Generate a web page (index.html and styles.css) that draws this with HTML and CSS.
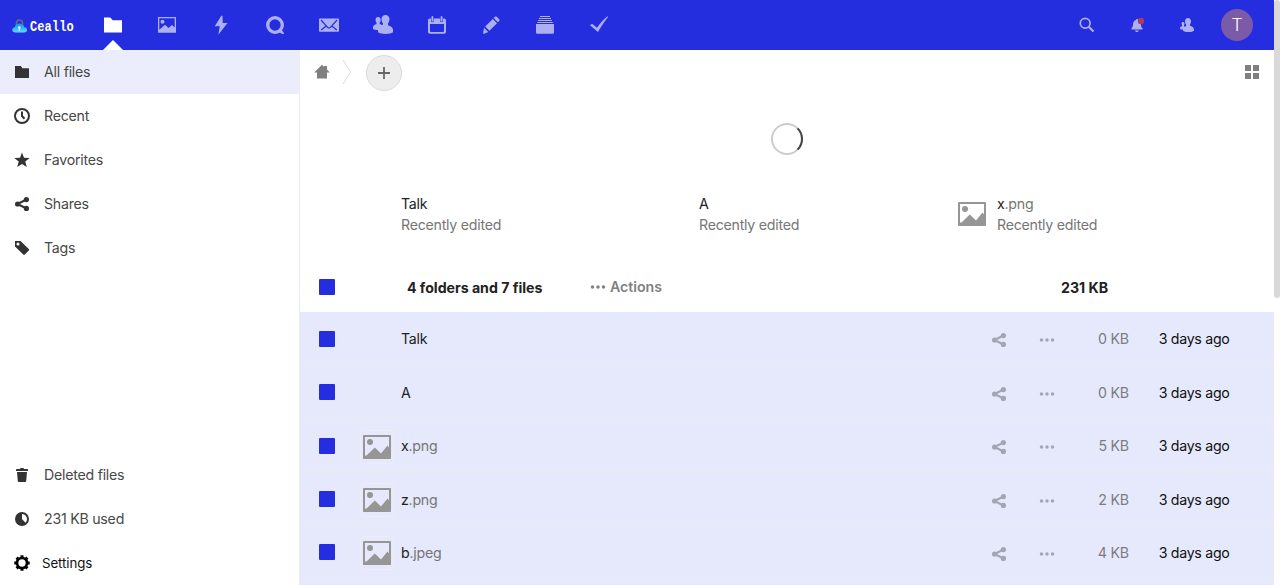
FILE: index.html
```html
<!DOCTYPE html>
<html lang="en">
<head>
<meta charset="utf-8">
<title>Files - Ceallo</title>
<link rel="stylesheet" href="styles.css">
</head>
<body>
<svg class="sprite" width="0" height="0">
  <defs>
    <symbol id="folder" viewBox="0 0 16 16"><path d="M1 2v12h14V4.2H8.4L6.900 2z"/></symbol>
    <symbol id="picture" viewBox="0 0 32 32"><path fill-rule="evenodd" d="M3 4h26c.6 0 1 .4 1 1v22c0 .6-.4 1-1 1H3c-.6 0-1-.4-1-1V5c0-.6.400-1 1-1zM4 6v18.400h1.500l8.300-8 6.200 6.200 6.500-8 1.500 1.800V6z"/><circle cx="9" cy="11" r="3"/></symbol>
    <symbol id="share" viewBox="0 0 16 16"><path d="M3.500 8 12.500 3.500M3.500 8l9 4.500" stroke="currentColor" stroke-width="2"/><circle cx="3.600" cy="8" r="2.600"/><circle cx="12.400" cy="3.600" r="2.600"/><circle cx="12.400" cy="12.400" r="2.600"/></symbol>
    <symbol id="more" viewBox="0 0 16 16"><circle cx="2.500" cy="8" r="1.750"/><circle cx="8" cy="8" r="1.750"/><circle cx="13.500" cy="8" r="1.750"/></symbol>
    <symbol id="people" viewBox="0 0 20 20"><path d="M12.500 0c2.300 0 4 1.700 4 4.200 0 1.800-.7 3.100-1.500 4.200v1.800c1.900.8 4.900 1.800 5 4.600v2.500c-1.500 1.200-4.300 1.700-7.500 1.700s-6-.5-7.500-1.700v-2.200c-2 0-4-.3-5-1v-2c.2-1.800 2-2.500 3.500-3.100V7.600C2.900 7 2.500 6 2.500 5c0-1.900 1-3 2.600-3S7.700 3.100 7.700 5c0 1-.4 2-1 2.600V9c.8.300 1.600.6 2.300 1l1-.4V8.400C9 7.300 8.500 6 8.500 4.200 8.500 1.700 10.200 0 12.500 0z"/></symbol>
  </defs>
</svg>
<div class="page">
  <header class="header">
    <a class="logo">
      <svg class="logo-mark" width="16" height="14" viewBox="0 0 16 14"><defs><linearGradient id="cloud" x2="0" y2="1"><stop stop-color="#0b8ff5"/><stop offset="1" stop-color="#5ddcff"/></linearGradient></defs><path d="M4.500 6V4a3 3 0 0 1 6 0v2" fill="none" stroke="#686d70" stroke-width="1.600"/><path d="M3.500 13.500C1.500 13.500.3 12.600.3 11c0-1.400 1-2.600 2.500-2.700C3 6.200 5 4.500 7.500 4.500c2.600 0 4.500 1.600 4.900 3.800 1.700.1 2.700 1.200 2.700 2.700s-1.200 2.500-3.100 2.500z" fill="url(#cloud)"/><path d="M7.300 7.200a1.200 1.200 0 0 1 .7 2.200v2h-1.300v-2a1.200 1.200 0 0 1 .6-2.200z" fill="#fff"/></svg>
      <span class="logo-name">Ceallo</span>
    </a>
    <nav class="apps">
      <a class="app current"><svg width="20" height="20" viewBox="0 0 20 20"><path d="M1 2.500v15h18V5.200H9.700L7.300 2.500z"/></svg></a>
      <a class="app"><svg width="20" height="20" viewBox="0 0 20 20"><path fill-rule="evenodd" d="M1 2h18v15.700H1zM2.300 3.300v11.400L8 9.700l3.500 3.200 3.500-3 2.700 2.500V3.300z"/><circle cx="5.500" cy="6.700" r="2"/></svg></a>
      <a class="app"><svg width="20" height="20" viewBox="0 0 20 20"><path d="M10.300.7 3.800 11.300h5l-1.500 8.400L16.500 8h-4.800l-.2-7.300z"/></svg></a>
      <a class="app"><svg width="20" height="20" viewBox="0 0 20 20"><circle cx="10" cy="10" r="7.300" fill="none" stroke="currentColor" stroke-width="3.300"/><path d="M15.500 13 19 18.300c0 .8-.7 1-1.500.8L13 17z"/></svg></a>
      <a class="app"><svg width="20" height="20" viewBox="0 0 20 20"><rect y="3.500" width="20" height="13.300" rx=".7"/><path d="m2 5 6.600 7.300c.8.900 2 .9 2.800 0L18 5M2.200 15l5-4M17.800 15l-5-4" fill="none" stroke="#252edf" stroke-width="1.200"/></svg></a>
      <a class="app"><svg width="20" height="20"><use href="#people"/></svg></a>
      <a class="app"><svg width="20" height="20" viewBox="0 0 20 20"><path fill-rule="evenodd" d="M3 3.500h1V6c0 1.600 2.700 1.600 2.700 0V3.500h6.600V6c0 1.600 2.700 1.600 2.700 0V3.500h1c1.200 0 2 .8 2 2v11.300c0 1.200-.8 2-2 2H3c-1.200 0-2-.8-2-2V5.500c0-1.200.8-2 2-2zM3 9v6.700c0 .8.400 1.300 1.200 1.300h11.600c.8 0 1.200-.5 1.200-1.300V9z"/><rect x="4.500" y="1" width="1.800" height="5.500" rx=".9"/><rect x="13.700" y="1" width="1.800" height="5.500" rx=".9"/></svg></a>
      <a class="app"><svg width="20" height="20" viewBox="0 0 20 20"><path d="m3 12.800 4.200 4.200-4 1.700c-.8.300-1.300-.1-1-1zM4.200 11.600 11.800 4 16 8.200l-7.600 7.600zM12.700 3.100l1.300-1.300c.5-.5 1.200-.5 1.700 0l2.500 2.500c.5.5.5 1.200 0 1.700l-1.300 1.300z"/></svg></a>
      <a class="app"><svg width="20" height="20" viewBox="0 0 20 20"><path d="M5 1h10v1H5zM4 3h12v1.100H4zM3 5h14v1.100H3zM2.300 7h15.400v1.100H2.300zM1 9h18v8.500a1.300 1.300 0 0 1-1.300 1.300H2.300A1.300 1.300 0 0 1 1 17.500z"/></svg></a>
      <a class="app"><svg width="20" height="20" viewBox="0 0 20 20"><path d="M1 10.200 3 8.800l5 3.900C11 8.300 14.500 4.300 18.500 1.300l.5.600C15.500 6.500 12 11.500 9 17z"/></svg></a>
    </nav>
    <div class="tools">
      <a class="tool"><svg width="16" height="16" viewBox="0 0 16 16"><circle cx="6.200" cy="6.200" r="4.900" fill="none" stroke="currentColor" stroke-width="1.700"/><path d="m9.500 9.500 5 5" stroke="currentColor" stroke-width="2.200"/></svg></a>
      <a class="tool"><svg width="16" height="16" viewBox="0 0 16 16"><path d="M8 2c-.7 0-1 .5-1 1-2.500.6-3 2.800-3 5-.1 1.600-1 2.500-1.500 3.200V12.500h11v-1.300C12.500 10.500 12 9.600 12 8c0-2.200-1-4.400-3-5 0-.5-.3-1-1-1zM6 13.500c0 .9.800 1.500 1.900 1.500s1.900-.6 1.900-1.500z"/><circle cx="12" cy="4" r="3.200" fill="#ad3865"/></svg></a>
      <a class="tool"><svg width="16" height="16" viewBox="0 0 16 16"><path d="M9 1c1.900 0 3 1.300 3 3.200 0 1.400-.5 2.400-1 3v1.600c1.800.5 4 1.500 4 3.700v1.200c-1 .9-3 1.300-5.500 1.300S5 14.600 4 13.700v-1.200c-1.200 0-2.200-.1-3-.6v-1.300c.3-.8 1.300-1 2-1.300V8.100c-.4-.4-.5-.9-.5-1.500C2.500 5.600 3 5 4 5s1.500.6 1.500 1.600c0 .6-.1 1.100-.5 1.500v1.200l1 .4 1-.8V7.200c-.5-.6-1-1.600-1-3C6 2.300 7.100 1 9 1z"/></svg></a>
      <a class="tool"><span class="avatar">T</span></a>
    </div>
  </header>
  <div class="body">
    <aside class="sidebar">
      <ul class="nav">
        <li class="nav-item active"><svg width="16" height="16"><use href="#folder"/></svg><span>All files</span></li>
        <li class="nav-item"><svg width="16" height="16" viewBox="0 0 16 16"><circle cx="8" cy="8" r="7" fill="none" stroke="currentColor" stroke-width="2"/><path d="M8 3.500V8l2.500 2.700" fill="none" stroke="currentColor" stroke-width="2"/></svg><span>Recent</span></li>
        <li class="nav-item"><svg width="16" height="16" viewBox="0 0 16 16"><path d="m8 .6 2 5.100 5.700.2-4.400 3.600 1.500 5.500L8 11.900 3.200 15l1.500-5.500L.3 5.900 6 5.700z"/></svg><span>Favorites</span></li>
        <li class="nav-item"><svg width="16" height="16"><use href="#share"/></svg><span>Shares</span></li>
        <li class="nav-item"><svg width="16" height="16" viewBox="0 0 16 16"><path fill-rule="evenodd" d="M1 1v5.500l8.300 8c.5.500 1 .5 1.500 0l4-4c.5-.5.500-1 0-1.500l-8.300-8zM4 2.600a1.500 1.500 0 1 1 0 3 1.500 1.500 0 0 1 0-3z"/></svg><span>Tags</span></li>
      </ul>
      <ul class="nav nav-bottom">
        <li class="nav-item"><svg width="16" height="16" viewBox="0 0 16 16"><path d="M6.500 1 6 2H3c-.6 0-1 .4-1 1v1h12V3c0-.6-.4-1-1-1h-3l-.5-1zM3 5l.8 9c.1.600.4 1 1 1h6.400c.6 0 .9-.4 1-1l.8-9z"/></svg><span>Deleted files</span></li>
        <li class="nav-item"><svg width="16" height="16" viewBox="0 0 16 16"><path fill-rule="evenodd" d="M8 1a7 7 0 1 1 0 14A7 7 0 0 1 8 1zm0 2v5l3.500 3.800C14.700 8.600 12.500 3 8 3z"/></svg><span>231 KB used</span></li>
        <li class="nav-item settings"><svg width="16" height="16" viewBox="0 0 16 16"><circle cx="8" cy="8" r="5" fill="none" stroke="currentColor" stroke-width="2.700"/><path d="M8 .3v2.500M8 13.200v2.500M.3 8h2.500M13.200 8h2.500M2.600 2.600l1.800 1.800M11.600 11.600l1.800 1.800M2.600 13.400l1.800-1.800M11.600 4.400l1.800-1.800" stroke="currentColor" stroke-width="3"/></svg><span>Settings</span></li>
      </ul>
    </aside>
    <main class="content">
      <div class="controls">
        <svg class="home" width="16" height="16" viewBox="0 0 16 16"><path d="M8 .8 .2 8.500H3v6h10v-6h2.800L13 5.600V2h-3v.8z"/></svg>
        <svg class="crumb" width="10" height="26" viewBox="0 0 10 26"><path d="m1 1 7.500 12L1 25" fill="none" stroke="#dcdcdc"/></svg>
        <span class="add"><svg width="12" height="12" viewBox="0 0 12 12"><path d="M6 0v12M0 6h12" stroke="#666" stroke-width="1.800"/></svg></span>
        <span class="grid-toggle"><i></i><i></i><i></i><i></i></span>
      </div>
      <div class="loading"><svg width="32" height="32" viewBox="0 0 32 32"><circle cx="16" cy="16" r="15" fill="none" stroke="#ccc" stroke-width="2"/><path d="M26.600 5.400a15 15 0 0 1 0 21.200" fill="none" stroke="#444" stroke-width="2"/></svg></div>
      <div class="recents">
        <div class="recent"><span class="thumb"></span><div><p class="name">Talk</p><p class="sub">Recently edited</p></div></div>
        <div class="recent"><span class="thumb"></span><div><p class="name">A</p><p class="sub">Recently edited</p></div></div>
        <div class="recent"><span class="thumb"><svg width="32" height="32"><use href="#picture"/></svg></span><div><p class="name">x<span>.png</span></p><p class="sub">Recently edited</p></div></div>
      </div>
      <div class="summary"><i class="check"></i><b class="count">4 folders and 7 files</b><span class="actions"><svg width="16" height="16"><use href="#more"/></svg><span>Actions</span></span><b class="total">231 KB</b></div>
      <div class="files">
        <div class="file"><i class="check"></i><span class="thumb"></span><span class="name">Talk</span><svg class="share" width="16" height="16"><use href="#share"/></svg><svg class="more" width="16" height="16"><use href="#more"/></svg><span class="size">0 KB</span><span class="date">3 days ago</span></div>
        <div class="file"><i class="check"></i><span class="thumb"></span><span class="name">A</span><svg class="share" width="16" height="16"><use href="#share"/></svg><svg class="more" width="16" height="16"><use href="#more"/></svg><span class="size">0 KB</span><span class="date">3 days ago</span></div>
        <div class="file"><i class="check"></i><span class="thumb framed"><svg width="32" height="32"><use href="#picture"/></svg></span><span class="name">x<span>.png</span></span><svg class="share" width="16" height="16"><use href="#share"/></svg><svg class="more" width="16" height="16"><use href="#more"/></svg><span class="size">5 KB</span><span class="date">3 days ago</span></div>
        <div class="file"><i class="check"></i><span class="thumb framed"><svg width="32" height="32"><use href="#picture"/></svg></span><span class="name">z<span>.png</span></span><svg class="share" width="16" height="16"><use href="#share"/></svg><svg class="more" width="16" height="16"><use href="#more"/></svg><span class="size">2 KB</span><span class="date">3 days ago</span></div>
        <div class="file"><i class="check"></i><span class="thumb framed"><svg width="32" height="32"><use href="#picture"/></svg></span><span class="name">b<span>.jpeg</span></span><svg class="share" width="16" height="16"><use href="#share"/></svg><svg class="more" width="16" height="16"><use href="#more"/></svg><span class="size">4 KB</span><span class="date">3 days ago</span></div>
        <div class="file"></div>
      </div>
    </main>
  </div>
</div>
<div class="scrollbar"><div class="scroll-thumb"></div></div>
</body>
</html>
```
FILE: styles.css
```css
* { box-sizing: border-box; }
body {
  margin: 0;
  height: 585px;
  display: flex;
  overflow: hidden;
  background: #fff;
  color: #222;
  font: 14.2px/21px Inter, "Liberation Sans", sans-serif;
  letter-spacing: -.25px;
}
svg { display: block; flex: none; fill: currentColor; }
p, ul { margin: 0; padding: 0; list-style: none; }
.sprite { position: absolute; }
.page { width: 1274px; height: 585px; display: flex; flex-direction: column; }
.scrollbar { width: 6px; }
.scroll-thumb { height: 298px; border-radius: 3px; background: #d9d9d9; }

.header { height: 50px; flex: none; display: flex; background: #252edf; color: #acaff2; }
.logo { width: 86px; padding-left: 12px; display: flex; align-items: center; gap: 2px; color: #fff; }
.logo-mark { margin-top: 2px; }
.logo-name { font: bold 12px/16px "Liberation Mono", monospace; letter-spacing: .1px; transform: scaleY(1.28); margin-top: 4px; }
.apps { display: flex; flex: 1; }
.app { width: 54px; display: flex; align-items: center; justify-content: center; }
.app.current { color: #fff; position: relative; }
.app.current::after { content: ""; position: absolute; left: 17px; bottom: 0; border: 10px solid transparent; border-top: 0; border-bottom-color: #fff; }
.tools { display: flex; padding-right: 12px; }
.tool { width: 50px; display: flex; align-items: center; justify-content: center; }
.avatar { width: 32px; height: 32px; border-radius: 50%; background: #7b5aa8; color: #fff; font-size: 17.5px; font-weight: 300; line-height: 32px; text-align: center; }

.body { flex: 1; min-height: 0; display: flex; }
.sidebar { width: 300px; border-right: 1px solid #ededed; display: flex; flex-direction: column; justify-content: space-between; }
.nav-item { height: 44px; padding-left: 14px; display: flex; align-items: center; gap: 14px; color: #484848; }
.nav-item svg { color: #333; }
.nav-item span { padding-bottom: 1px; }
.nav-item.active { background: #ebedfc; }
.nav-item.settings { gap: 12px; color: #111; font-size: 13.3px; letter-spacing: -.1px; }
.nav-item.settings span { padding: 1px 0 0; }
.nav-item.settings svg { color: #000; }

.content { flex: 1; min-width: 0; overflow: hidden; }
.controls { height: 44px; padding: 0 15px 0 14px; display: flex; align-items: center; }
.home { color: #808080; }
.crumb { margin-left: 12px; }
.add { width: 36px; height: 36px; margin: 2px 0 0 14px; border: 1px solid #dbdbdb; border-radius: 50%; background: #ededed; display: flex; align-items: center; justify-content: center; }
.grid-toggle { margin-left: auto; display: grid; grid-template-columns: 6px 6px; gap: 2px; }
.grid-toggle i { height: 6px; background: #808080; }
.loading { height: 90px; display: flex; align-items: center; justify-content: center; }
.recents { height: 78px; padding: 9px 0 0 58px; display: flex; }
.recent { width: 298px; display: flex; }
.thumb { width: 34px; height: 32px; flex: none; display: flex; color: #969696; }
.recent .thumb { width: 43px; height: 42px; padding-left: 2px; align-items: center; }
.name { color: #222; }
.name span, .sub { color: #767676; }

.check { width: 16px; height: 16px; flex: none; border-radius: 1px; background: #252edf; }
.summary { height: 50px; padding-left: 19px; display: flex; align-items: center; letter-spacing: -.04px; }
.count { margin-left: 72px; width: 183px; }
.actions { display: flex; align-items: center; gap: 4px; color: #808080; font-weight: 600; padding-bottom: 1px; }
.total { margin-left: auto; margin-right: 166px; }
.file { height: 53.4px; padding: 1.4px 44.5px 0 19px; display: flex; align-items: center; background: #e6e9fc; border-bottom: 1px solid #ebebee; }
.file .thumb { width: 32px; height: 32px; margin: 2px 8px 0 26px; }
.framed { outline: 1px solid #ededf3; outline-offset: 0; border-radius: 3px; }
.file .name { flex: 1; }
.share { color: #a3a5b3; margin-top: 3px; }
.more { color: #a3a5b3; margin: 3px 0 0 32px; }
.size { width: 74px; text-align: right; color: #7c7c82; }
.date { width: 100.7px; text-align: right; color: #111; letter-spacing: -.3px; }
```
